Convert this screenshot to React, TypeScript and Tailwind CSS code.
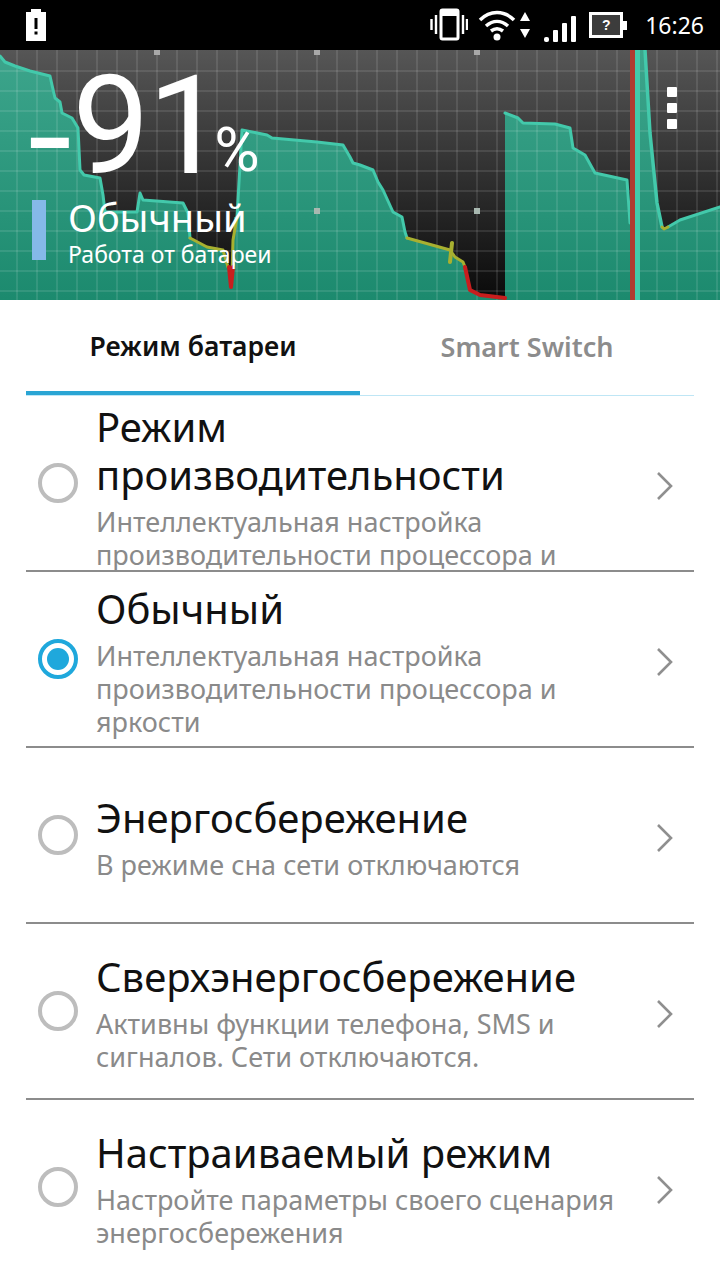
import React from 'react';

// chart points in header coords (y = page y - 50)
const tealA = '0,6 5,12 15,16 30,21 50,26 52,35 55,48 60,52 62,63 72,68 78,78 80,120 84,125 100,128 103,145 105,162 137,162 140,143 143,150 183,153 188,163 190,188';
const tealB = '237,167 242,80 267,85 272,88 317,92 343,95 350,107 353,113 360,115 373,120 378,132 383,140 393,162 402,167 405,182 407,188';
const tealC = '505,63 518,68 523,73 555,74 570,78 573,98 585,105 595,123 627,130 630,173';
const tealD = '637.5,250 637.5,0';
const tealF = '645,0 650,83 657,153 662,177';
const tealE = '668,177 680,170 720,157';
const yellowA = '190,188 207,197 223,200 228,217';
const yellowB = '232,225 233,190 237,167';
const yellowC = '407,188 450,200 455,207 463,212 465,217';
const fill =
  '0,250 0,6 5,12 15,16 30,21 50,26 52,35 55,48 60,52 62,63 72,68 78,78 80,120 84,125 100,128 103,145 105,162 137,162 140,143 143,150 183,153 188,163 190,188 207,197 223,200 228,217 231,237 234,167 237,167 242,80 267,85 272,88 317,92 343,95 350,107 353,113 360,115 373,120 378,132 383,140 393,162 402,167 405,182 407,188 450,200 455,207 463,212 465,217 470,240 480,245 505,248 505,63 518,68 523,73 555,74 570,78 573,98 585,105 595,123 627,130 630,173 630,250 637,250 637,0 645,0 650,83 657,153 662,177 668,177 680,170 720,157 720,250';

const gridX = Array.from({ length: 36 }, (_, i) => 17 + i * 20);
const gridY = Array.from({ length: 12 }, (_, i) => 21 + i * 20);

const BatteryChart = () => (
  <svg className="absolute inset-0" width="720" height="250" viewBox="0 0 720 250">
    <defs>
      <linearGradient id="bg" x1="0" y1="0" x2="0" y2="1">
        <stop offset="0" stopColor="#565656" />
        <stop offset="1" stopColor="#0a0a0a" />
      </linearGradient>
      <linearGradient id="green" x1="0" y1="0" x2="0" y2="1">
        <stop offset="0" stopColor="#3da58c" />
        <stop offset="1" stopColor="#1c8a6e" />
      </linearGradient>
    </defs>
    <rect width="720" height="250" fill="url(#bg)" />
    <polygon points={fill} fill="url(#green)" />
    {gridX.map((x) => (
      <line key={x} x1={x} x2={x} y1="0" y2="250" stroke="#fff" strokeOpacity="0.1" strokeWidth="2" />
    ))}
    {gridY.map((y) => (
      <line key={y} x1="0" x2="720" y1={y} y2={y} stroke="#fff" strokeOpacity="0.1" strokeWidth="2" />
    ))}
    {[157, 317, 477, 637].map((x) => (
      <rect key={x} x={x - 3} y="0" width="6" height="5" fill="#a8a8a8" />
    ))}
    {[317, 477, 637].map((x) => (
      <rect key={x} x={x - 3} y="158" width="6" height="6" fill="#a8b8b0" />
    ))}
    <g fill="none" strokeLinejoin="round" strokeLinecap="round" strokeWidth="3">
      <polyline points={tealA} stroke="#43c9ab" />
      <polyline points={tealB} stroke="#43c9ab" />
      <polyline points={tealC} stroke="#43c9ab" />
      <polyline points={tealE} stroke="#43c9ab" />
      <polyline points={yellowA} stroke="#a8b030" />
      <polyline points={yellowB} stroke="#a8b030" />
      <polyline points={yellowC} stroke="#a8b030" />
      <polyline points="229,217 231,237 233,217" stroke="#c81e1e" strokeWidth="4" />
      <polyline points="465,217 470,240 480,245 505,248" stroke="#c81e1e" strokeWidth="4" />
      <line x1="450" x2="452" y1="212" y2="193" stroke="#a8b030" strokeWidth="4" />
      <line x1="632.5" x2="632.5" y1="0" y2="250" stroke="#b03a30" strokeWidth="5" strokeLinecap="butt" />
      <polyline points={tealD} stroke="#43c9ab" strokeWidth="5" strokeLinecap="butt" />
      <polyline points={tealF} stroke="#43c9ab" strokeWidth="3.5" />
      <polyline points="662,177 664,179 668,177" stroke="#a8b030" />
    </g>
  </svg>
);

const StatusBar = () => (
  <div className="h-[50px] bg-black flex items-center justify-between pl-[26px] pr-4 text-white">
    <svg width="20" height="32" viewBox="0 0 20 32" fill="#fff">
      <path d="M5 0h10v3h5v29H0V3h5z" />
      <rect x="8.5" y="9" width="3" height="11" fill="#000" />
      <rect x="8.5" y="22.5" width="3" height="3" fill="#000" />
    </svg>
    <div className="flex items-center">
      <svg width="38" height="34" viewBox="0 0 38 34" fill="none" stroke="#fff" strokeWidth="2.4">
        <rect x="11" y="2" width="17" height="29" rx="1.5" strokeWidth="3" />
        <rect x="12" y="3" width="15" height="5" fill="#fff" stroke="none" />
        <path d="M1.5 11v11M6 7v19M33 7v19M37 11v11" />
      </svg>
      <svg className="ml-[10px]" width="38" height="34" viewBox="0 0 38 34" fill="none" stroke="#fff" strokeWidth="3.5">
        <path d="M2 12C12 2 26 2 36 12M8 18c7-6 15-6 22 0M13 23c4-3 8-3 12 0" />
        <circle cx="19" cy="29" r="3.5" fill="#fff" stroke="none" />
      </svg>
      <svg className="ml-[3px]" width="12" height="28" viewBox="0 0 12 28" fill="#fff">
        <path d="M6 1l5 9H1zM6 27l-5-9h10z" />
      </svg>
      <svg className="ml-[13px] mt-[8px]" width="32" height="28" viewBox="0 0 32 28" fill="#fff">
        <rect x="0" y="22" width="5" height="5" rx="2" />
        <rect x="9" y="15" width="5" height="12" rx="1" />
        <rect x="18" y="8" width="5" height="19" rx="1" />
        <rect x="27" y="1" width="5" height="26" rx="1" />
      </svg>
      <div className="ml-[13px] flex items-center">
        <div className="w-[34px] h-[26px] border-[3px] border-white bg-[#3c3c3c] flex items-center justify-center text-[14px] leading-none font-bold font-['Liberation_Sans',sans-serif]">
          ?
        </div>
        <div className="w-[4px] h-[9px] bg-white" />
      </div>
      <span className="ml-[18px] text-[23px] leading-none font-['Noto_Sans',sans-serif]">16:26</span>
    </div>
  </div>
);

const Header = () => (
  <div className="relative h-[250px] overflow-hidden text-white font-['Noto_Sans',sans-serif]">
    <BatteryChart />
    <div className="absolute left-[28px] top-[-4px] flex items-baseline font-['Roboto',sans-serif]">
      <span className="relative top-[11px] text-[138px] leading-[160px] scale-x-[1.15] origin-left">-</span>
      <span className="ml-[6px] text-[138px] leading-[160px] tracking-[-2px]">91</span>
      <span className="relative -top-[2px] -ml-[9px] text-[62px] leading-none">%</span>
    </div>
    <div className="absolute left-[32px] top-[150px] w-[14px] h-[60px] bg-[#85b9e8]" />
    <div className="absolute left-[68px] top-[142px]">
      <div className="text-[38px] leading-[50px]">Обычный</div>
      <div className="text-[23px] leading-[28px] -mt-[2px]">Работа от батареи</div>
    </div>
    <div className="absolute left-[667px] top-[37px] flex flex-col gap-[6px]">
      <div className="w-[10px] h-[10px] bg-white rounded-[1px]" />
      <div className="w-[10px] h-[10px] bg-white rounded-[1px]" />
      <div className="w-[10px] h-[10px] bg-white rounded-[1px]" />
    </div>
  </div>
);

const Tabs = () => (
  <div className="mx-[26px] h-[96px] flex border-b border-[#bfe6f5] font-['Noto_Sans',sans-serif]">
    <div className="w-[334px] h-[95px] pt-[3px] border-b-[4px] border-[#2aa5d4] flex items-center justify-center text-[26.5px] font-semibold text-[#111]">
      Режим батареи
    </div>
    <div className="flex-1 flex items-center justify-center text-[27px] font-semibold text-[#8c8c8c]">
      Smart Switch
    </div>
  </div>
);

const modes = [
  {
    title: 'Режим производительности',
    desc: 'Интеллектуальная настройка производительности процессора и',
    clipped: true,
  },
  {
    title: 'Обычный',
    desc: 'Интеллектуальная настройка производительности процессора и яркости',
    active: true,
  },
  { title: 'Энергосбережение', desc: 'В режиме сна сети отключаются' },
  { title: 'Сверхэнергосбережение', desc: 'Активны функции телефона, SMS и сигналов. Сети отключаются.' },
  { title: 'Настраиваемый режим', desc: 'Настройте параметры своего сценария энергосбережения' },
];

type ModeProps = { title: string; desc: string; active?: boolean; clipped?: boolean };

const ModeRow = ({ title, desc, active, clipped }: ModeProps) => (
  <div className="h-[176px] mx-[26px] border-b-2 border-[#8c8c8c] last:border-b-transparent flex items-center overflow-hidden">
    {active ? (
      <div className="ml-[12px] w-[40px] h-[40px] shrink-0 rounded-full border-[4px] border-[#1fa8dc] flex items-center justify-center">
        <div className="w-[22px] h-[22px] rounded-full bg-[#1fa8dc]" />
      </div>
    ) : (
      <div className="ml-[12px] w-[40px] h-[40px] shrink-0 rounded-full border-[4px] border-[#bdbdbd]" />
    )}
    <div className={clipped ? 'ml-[18px] flex-1 min-w-0 pr-[20px] pt-[8px]' : 'ml-[18px] flex-1 min-w-0 pr-[20px] pt-[4px]'}>
      <div className="text-[40px] leading-[48px] text-[#111]">{title}</div>
      <div className="text-[27px] leading-[33px] text-[#8a8a8a] mt-[6px]">{desc}</div>
    </div>
    <svg className="shrink-0 mr-[20px] mt-[6px]" width="18" height="30" viewBox="0 0 18 30" fill="none" stroke="#8f8f8f" strokeWidth="2.6">
      <polyline points="2,2 15,15 2,28" />
    </svg>
  </div>
);

export default function App() {
  return (
    <div className="w-[720px] h-[1280px] overflow-hidden bg-white font-['Noto_Sans',sans-serif]">
      <StatusBar />
      <Header />
      <Tabs />
      {modes.map((m) => (
        <ModeRow key={m.title} {...m} />
      ))}
    </div>
  );
}
